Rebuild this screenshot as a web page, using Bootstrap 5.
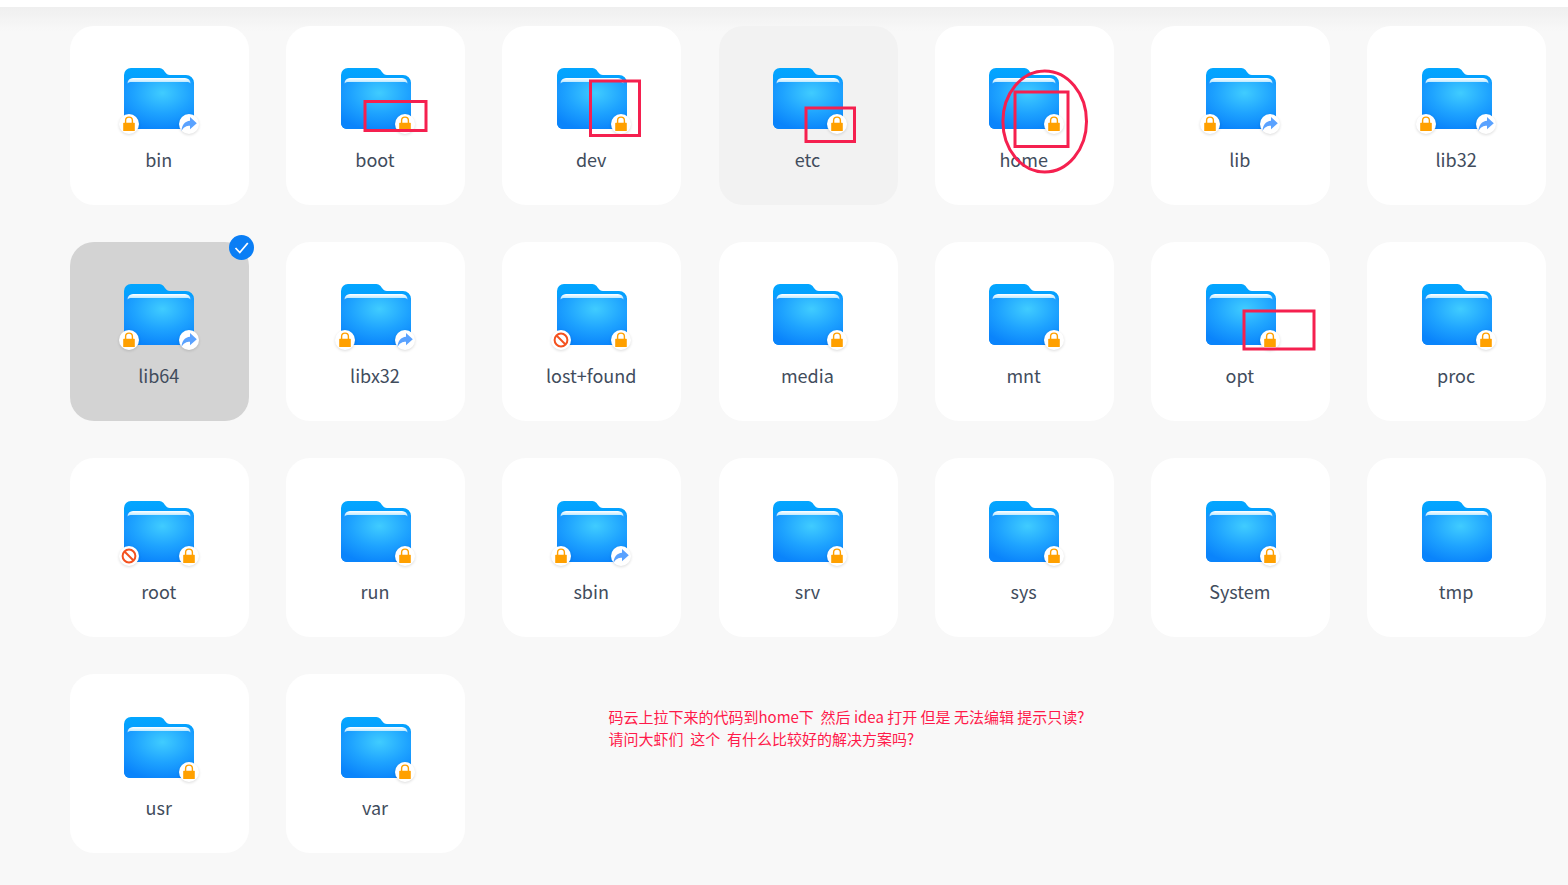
<!DOCTYPE html>
<html lang="zh-CN"><head><meta charset="utf-8"><title>Files</title>
<link href="https://cdn.jsdelivr.net/npm/bootstrap@5.3.0/dist/css/bootstrap.min.css" rel="stylesheet">
<style>
html,body{height:885px;overflow:hidden}
body{background:#f8f8f8;font-family:"Noto Sans CJK SC","Noto Sans",sans-serif;position:relative}
.top-edge{height:7px;background:#fff}
.shade{height:24px;background:linear-gradient(#efefef,#f8f8f8);margin-bottom:-24px}
.file-grid{display:grid;grid-template-columns:repeat(7,179px);column-gap:37.22px;row-gap:37.1px;padding:19px 0 0 70px}
.tile{height:179px;background:#fff;border-radius:24px;padding-top:42.35px;position:relative}
.tile.hov{background:#f2f2f2}
.tile.sel{background:#d3d3d3}
.ico{width:70px;height:61px;margin-left:-.2px;position:relative}
.ico>svg{display:block;width:70px;height:61px}
.bdg{position:absolute;top:45.2px;width:20px;height:20px;border-radius:50%;background:#fff;box-shadow:0 1px 3px rgba(0,0,0,.14);display:flex;align-items:center;justify-content:center}
.bdg svg{display:block}
.bdg.l{left:-5.4px}.bdg.r{left:54.4px}
.nm{font-size:18px;line-height:26px;color:#414c5c;margin-top:16.8px;margin-left:-1.5px}
.chk{position:absolute;top:-7px;right:-5px;width:25px;height:25px}
.note{grid-column:3/8;padding:32px 0 0 106px;color:#ff1a4a;font-size:15px;line-height:22px;white-space:pre}
.marks{position:absolute;left:0;top:0;width:1568px;height:885px;pointer-events:none}
</style></head><body>
<svg width="0" height="0" class="d-block" style="position:absolute">
<defs>
<radialGradient id="fg" cx="55%" cy="28%" r="75%"><stop offset="0" stop-color="#40ccff"/><stop offset=".55" stop-color="#1ea3ff"/><stop offset="1" stop-color="#0a84fb"/></radialGradient>
<linearGradient id="fb" x1="0" y1="0" x2="0" y2="1"><stop offset="0" stop-color="#03a6ff"/><stop offset="1" stop-color="#0a84fb"/></linearGradient>
<linearGradient id="fw" x1="0" y1="0" x2="0" y2="1"><stop offset="0" stop-color="#fff"/><stop offset="1" stop-color="#a8e2ff"/></linearGradient>
<symbol id="folder" viewBox="0 0 70 61">
<path d="M0 7a7 7 0 0 1 7-7h27c4 0 5 1 7 4 1.500 2 2.500 3 5 3h16a8 8 0 0 1 8 8v40a6 6 0 0 1-6 6H6a6 6 0 0 1-6-6z" fill="url(#fb)"/>
<path d="M0 17a6 6 0 0 1 6-6h58a6 6 0 0 1 6 6v38a6 6 0 0 1-6 6H6a6 6 0 0 1-6-6z" fill="url(#fg)"/>
<path d="M3.500 15.500a5.500 5.500 0 0 1 5.500-5.500h52a5.500 5.500 0 0 1 5.500 5.500c-1-1.100-2-1.500-4-1.500H8c-2 0-3.500.4-4.500 1.500z" fill="url(#fw)"/>
</symbol>
<symbol id="lock" viewBox="0 0 14 16"><path d="M3.600 7V4.500a3.400 3.400 0 0 1 6.800 0V7" fill="none" stroke="#ffa000" stroke-width="1.400"/><rect x="1.200" y="6.800" width="11.600" height="8.200" rx=".6" fill="#ffa000"/></symbol>
<symbol id="link" viewBox="0 0 16 16"><path d="M9 1 15.800 7.200 9 13.200V9.700C5.500 9.700 2.500 11 .5 15c.2-6 3.500-10 8.500-10.300z" fill="#5aa2ff"/></symbol>
<symbol id="deny" viewBox="0 0 16 16"><circle cx="8" cy="8" r="6.400" fill="none" stroke="#f4511e" stroke-width="2"/><path d="M3.500 3.500l9 9" stroke="#f4511e" stroke-width="2"/></symbol>
</defs></svg>

<div class="top-edge"></div><div class="shade"></div>

<main class="file-grid" id="g"></main>

<svg class="marks" viewBox="0 0 1568 885" fill="none" stroke="#f5204f" stroke-width="3">
<rect x="365" y="101.500" width="61" height="29"/>
<rect x="590.500" y="81" width="49" height="54.500"/>
<rect x="806" y="108" width="48.500" height="33.500"/>
<rect x="1015" y="92" width="53" height="54.500"/>
<ellipse cx="1044.700" cy="121.500" rx="41.800" ry="50.500"/>
<rect x="1244" y="311" width="70" height="38"/>
</svg>

<script src="https://cdn.jsdelivr.net/npm/bootstrap@5.3.0/dist/js/bootstrap.bundle.min.js"></script>
<script>
var L='lock',S='link',D='deny';
var items=[['bin',L,S],['boot',0,L],['dev',0,L],['etc',0,L,'hov'],['home',0,L],['lib',L,S],['lib32',L,S],
['lib64',L,S,'sel'],['libx32',L,S],['lost+found',D,L],['media',0,L],['mnt',0,L],['opt',0,L],['proc',0,L],
['root',D,L],['run',0,L],['sbin',L,S],['srv',0,L],['sys',0,L],['System',0,L],['tmp',0,0],
['usr',0,L],['var',0,L]];
function b(k,p){if(!k)return '';var w=k==L?14:16;
return '<span class="bdg '+p+'"><svg width="'+w+'" height="16"><use href="#'+k+'"/></svg></span>';}
var h='';
items.forEach(function(i){
h+='<div class="tile d-flex flex-column align-items-center '+(i[3]||'')+'"><div class="ico"><svg><use href="#folder"/></svg>'+b(i[1],'l')+b(i[2],'r')+'</div><div class="nm">'+i[0]+'</div>'+
(i[3]=='sel'?'<svg class="chk" viewBox="0 0 25 25"><circle cx="12.500" cy="12.500" r="12.500" fill="#0a7ef5"/><path d="M6.500 13l4.300 4.500 8-9.500" fill="none" stroke="#fff" stroke-width="1.800"/></svg>':'')+'</div>';
});
h+='<div class="note">码云上拉下来的代码到home下  然后 idea 打开 但是 无法编辑 提示只读?\n请问大虾们  这个  有什么比较好的解决方案吗?</div>';
document.getElementById('g').innerHTML=h;
</script>
</body></html>
